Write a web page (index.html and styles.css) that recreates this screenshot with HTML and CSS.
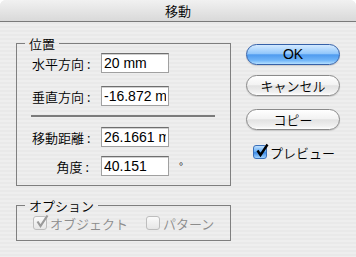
FILE: index.html
```html
<!DOCTYPE html>
<html>
<head>
<meta charset=utf-8>
<title>移動</title>
<link rel="stylesheet" href="styles.css">
</head>
<body>
<div class="window">
  <div class="titlebar">移動</div>
  <div class="content">
    <div class="leftcol">
      <fieldset class="group pos">
        <legend>位置</legend>
        <div class="row"><label>水平方向 :</label><input class="field" value="20 mm"></div>
        <div class="row r2"><label>垂直方向 :</label><input class="field" value="-16.872 mm"></div>
        <div class="sep"></div>
        <div class="row r3"><label>移動距離 :</label><input class="field" value="26.1661 mm"></div>
        <div class="row r4"><label>角度 :</label><input class="field" value="40.151"><span class="deg">°</span></div>
      </fieldset>
      <fieldset class="group opts">
        <legend>オプション</legend>
        <div class="checks">
          <span class="check dis">
            <span class="box on-gray"><svg width="16" height="16" viewBox="0 0 16 16"><path d="M3.5 7.5 L6.5 12 L13.5 1.5" fill="none" stroke="#9a9a9a" stroke-width="2.2"/></svg></span>
            オブジェクト
          </span>
          <span class="check dis second">
            <span class="box off"></span>
            パターン
          </span>
        </div>
      </fieldset>
    </div>
    <div class="rightcol">
      <button class="btn ok">OK</button>
      <button class="btn cancel">キャンセル</button>
      <button class="btn copy">コピー</button>
      <span class="check preview">
        <span class="box blue"><svg width="16" height="16" viewBox="0 0 16 16"><path d="M3.5 7.5 L6.5 12 L13.5 1.5" fill="none" stroke="#000" stroke-width="2.4"/></svg></span>
        プレビュー
      </span>
    </div>
  </div>
</div>
</body>
</html>
```

FILE: styles.css
```css
* {
    box-sizing: border-box;
}
html, body {
    margin: 0;
    background: #ffffff;
}
body {
    font-family: "Noto Sans CJK JP", "Liberation Sans", sans-serif;
    font-size: 13px;
    font-weight: 350;
    color: #000;
}
.window {
    width: 356px;
    height: 257px;
    background: repeating-linear-gradient(#eeeeee 0 2px, #e9e9e9 2px 4px);
    overflow: hidden;
    border-radius: 6px 6px 0 0;
}
.titlebar {
    height: 22px;
    line-height: 21px;
    text-align: center;
    font-size: 13px;
    background: linear-gradient(#f1f1f1, #d9d9d9);
    border-bottom: 1px solid #7a7a7a;
}
.content {
    display: flex;
    padding: 14px 0 0 16px;
}
.leftcol {
    width: 215px;
}
.group {
    margin: 0;
    border: 1px solid #7f7f7f;
    padding: 2px 14px 0 15px;
}
.group legend {
    margin-left: -7px;
    padding: 0 4px;
    line-height: 15px;
    font-size: 13px;
}
.pos {
    height: 150px;
}
.row {
    display: flex;
    align-items: center;
    height: 20px;
}
.row label {
    width: 57px;
    text-align: right;
    margin-right: 12px;
    white-space: nowrap;
}
.r2 {
    margin-top: 13px;
}
.r3 {
    margin-top: 10px;
}
.r4 {
    margin-top: 9px;
}
.sep {
    margin: 9px 0 0 -1px;
    width: 184px;
    height: 2px;
    background: #7a7a7a;
}
.field {
    width: 68px;
    height: 20px;
    margin: 0;
    padding: 0 2px;
    font-family: "Liberation Sans", sans-serif;
    font-size: 14px;
    color: #000;
    background: #fff;
    border: 1px solid #a0a0a0;
    border-top-color: #6e6e6e;
    box-shadow: inset 0 1px 0 #d0d0d0;
    outline: none;
}
.deg {
    margin-left: 10px;
    font-size: 11px;
}
.opts {
    margin-top: 12px;
    height: 43px;
}
.checks {
    display: flex;
    align-items: center;
    height: 16px;
    margin-left: 1px;
}
.check {
    display: flex;
    align-items: center;
    height: 16px;
}
.check .box {
    width: 14px;
    height: 14px;
    margin-right: 3px;
    border-radius: 3px;
    position: relative;
}
.box svg {
    position: absolute;
    left: 0;
    top: -3px;
}
.dis {
    color: #8c8c8c;
}
.second {
    margin-left: 18px;
}
.on-gray, .off {
    border: 1px solid #bdbdbd;
    background: linear-gradient(#fafafa, #e6e6e6);
}
.blue {
    border: 1px solid #3a6fb8;
    background: linear-gradient(#bfe0ff, #5ea9f4 50%, #3d8ae6 55%, #9fd3ff);
}
.rightcol {
    display: flex;
    flex-direction: column;
    margin-left: 15px;
    padding-top: 8px;
}
.btn {
    width: 94px;
    height: 21px;
    margin: 0;
    padding: 0;
    border-radius: 11px;
    font-family: "Noto Sans CJK JP", "Liberation Sans", sans-serif;
    font-size: 13px;
    font-weight: 350;
    line-height: 19px;
    color: #000;
    border: 1px solid #8a8a8a;
    background: linear-gradient(#ffffff, #f3f3f3 45%, #e2e2e2 52%, #f0f0f0 85%, #ffffff);
    box-shadow: 0 1px 1px rgba(0,0,0,0.15);
}
.ok {
    border-color: #3661a8;
    font-family: "Liberation Sans", sans-serif;
    font-size: 14px;
    font-weight: 400;
    background: linear-gradient(#d4eaff, #92c7fb 45%, #4f9bef 52%, #6fb4f8 80%, #b5e0ff);
}
.cancel {
    margin-top: 10px;
}
.copy {
    margin-top: 13px;
}
.preview {
    margin: 14px 0 0 7px;
}
```
